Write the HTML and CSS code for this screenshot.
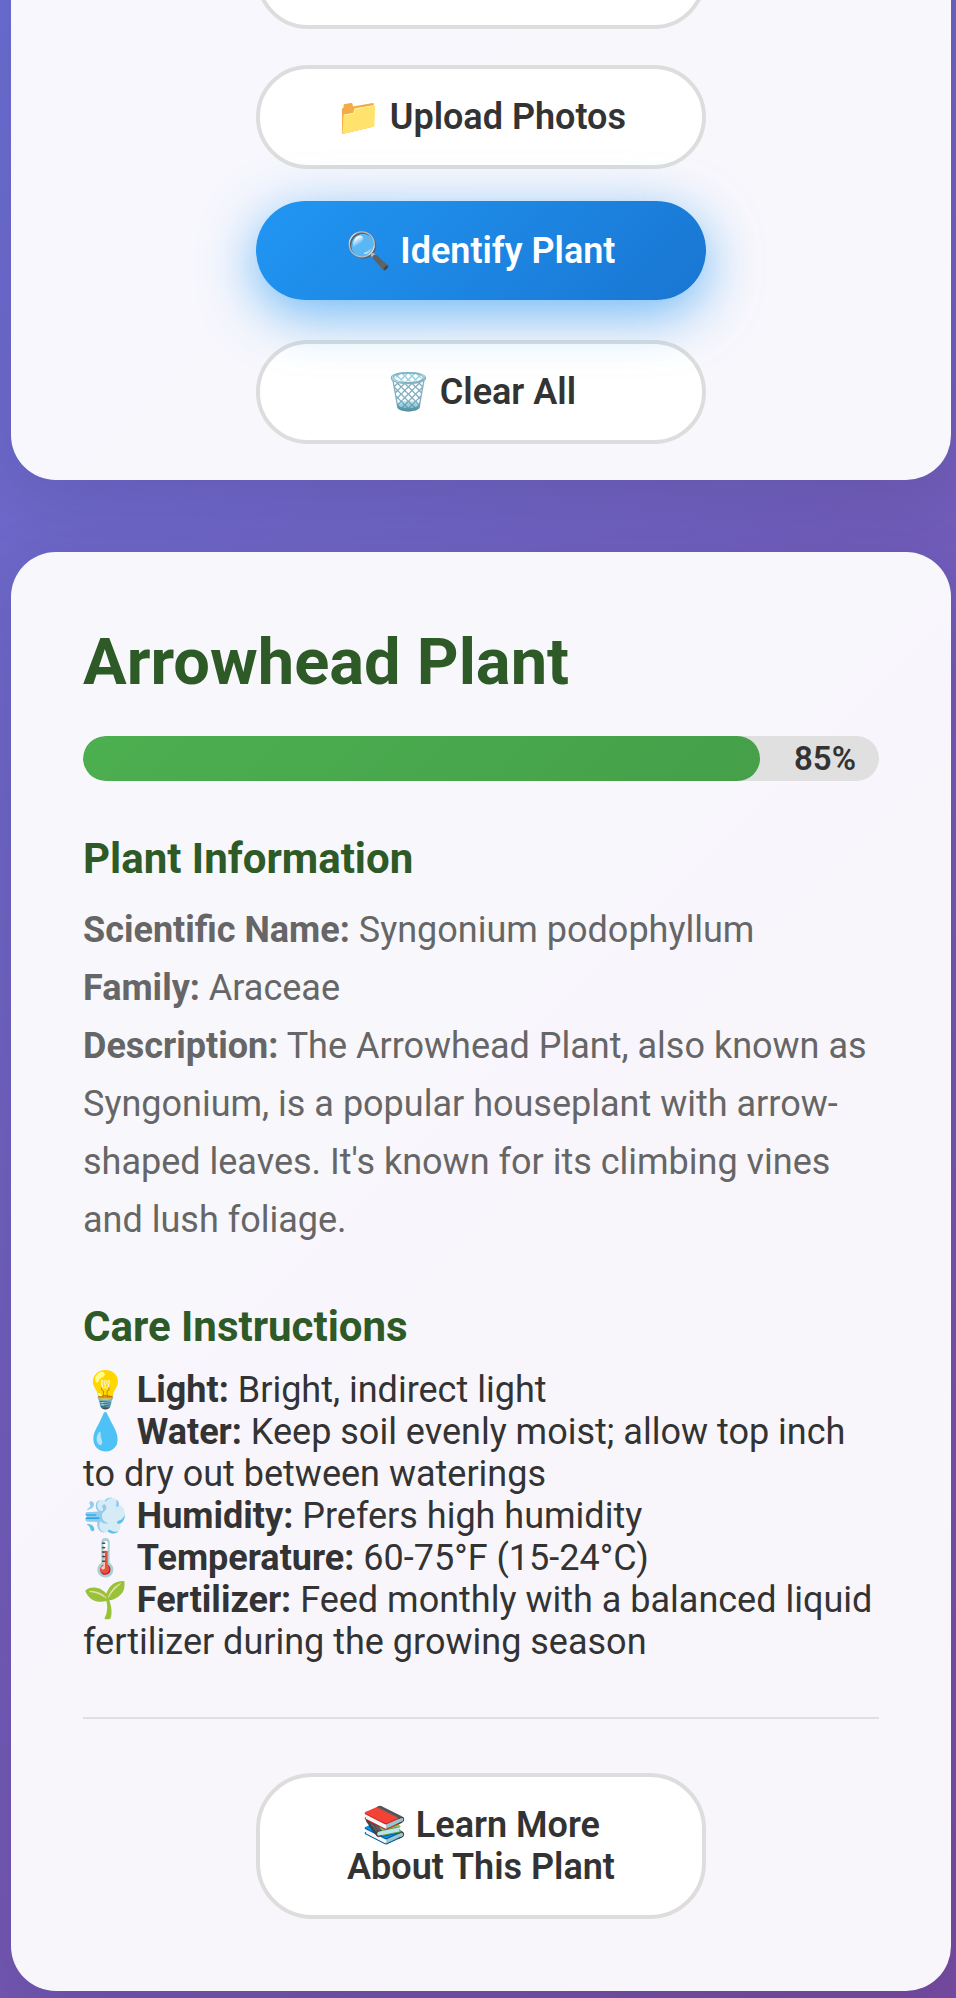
FILE: index.html
```html
<!DOCTYPE html>
<html lang="en">
<head>
<meta charset="UTF-8">
<meta name="viewport" content="width=device-width, initial-scale=1.0">
<title>Plant Identifier</title>
<link rel="stylesheet" href="styles.css">
</head>
<body>
<main class="container">
    <section class="card upload-card">
        <div class="button-group">
            <button type="button" class="btn" aria-label="Take Photo"></button>
            <button type="button" class="btn">📁 Upload Photos</button>
            <button type="button" class="btn btn-primary">🔍 Identify Plant</button>
            <button type="button" class="btn">🗑️ Clear All</button>
        </div>
    </section>

    <section class="card result-card">
        <h2>Arrowhead Plant</h2>
        <div class="confidence-bar">
            <div class="confidence-fill" style="width: 85%"></div>
            <span class="confidence-text">85%</span>
        </div>

        <div class="plant-info">
            <h3>Plant Information</h3>
            <p><strong>Scientific Name:</strong> Syngonium podophyllum</p>
            <p><strong>Family:</strong> Araceae</p>
            <p><strong>Description:</strong> The Arrowhead Plant, also known as Syngonium, is a popular houseplant with arrow-shaped leaves. It's known for its climbing vines and lush foliage.</p>
        </div>

        <div class="care-info">
            <h3>Care Instructions</h3>
            <ul class="care-list">
                <li>💡 <strong>Light:</strong> Bright, indirect light</li>
                <li>💧 <strong>Water:</strong> Keep soil evenly moist; allow top inch to dry out between waterings</li>
                <li>💨 <strong>Humidity:</strong> Prefers high humidity</li>
                <li>🌡️ <strong>Temperature:</strong> 60-75°F (15-24°C)</li>
                <li>🌱 <strong>Fertilizer:</strong> Feed monthly with a balanced liquid fertilizer during the growing season</li>
            </ul>
        </div>

        <div class="learn-more">
            <button type="button" class="btn">📚 Learn More About This Plant</button>
        </div>
    </section>
</main>
</body>
</html>
```
FILE: styles.css
```css
* {
    margin: 0;
    padding: 0;
    box-sizing: border-box;
}
body {
    font-family: Roboto, "Noto Color Emoji", sans-serif;
    font-size: 36px;
    line-height: 42px;
    color: #333;
    background: linear-gradient(135deg, #6b6ed3 0%, #764ba2 100%);
}
.container {
    display: flex;
    flex-direction: column;
    gap: 72px;
    padding: 0 5px 7px 11px;
    overflow: hidden;
}
.card {
    background: rgba(255, 255, 255, 0.95);
    border-radius: 45px;
    box-shadow: 0 18px 72px rgba(0, 0, 0, 0.1);
}
/* starts above the fold, the first button is cut by the window */
.upload-card {
    margin-top: -111px;
    padding: 36px;
}
.result-card {
    padding: 72px;
}
.button-group {
    display: flex;
    flex-direction: column;
    align-items: center;
    gap: 36px;
}
.btn {
    width: 450px;
    max-width: 100%;
    min-height: 104px;
    padding: 27px 68px;
    border: 4px solid #ddd;
    border-radius: 56px;
    background: white;
    color: #333;
    font-family: inherit;
    font-size: 36px;
    font-weight: 600;
    line-height: 42px;
    cursor: pointer;
}
.btn-primary {
    min-height: 99px;
    border: none;
    background: linear-gradient(135deg, #2196f3, #1976d2);
    color: white;
    box-shadow: 0 14px 54px rgba(33, 150, 243, 0.65);
    transform: translateY(-4px);
}
h2 {
    font-size: 65px;
    line-height: 76px;
    color: #2d5a27;
    margin-bottom: 36px;
}
h3 {
    font-size: 42px;
    line-height: 49px;
    color: #2d5a27;
    margin-bottom: 18px;
}
.confidence-bar {
    position: relative;
    height: 45px;
    background: #e0e0e0;
    border-radius: 23px;
    overflow: hidden;
}
.confidence-fill {
    height: 100%;
    background: linear-gradient(135deg, #4caf50, #45a049);
    border-radius: 23px;
}
.confidence-text {
    position: absolute;
    top: 0;
    right: 23px;
    font-size: 33px;
    font-weight: 600;
    line-height: 45px;
}
.plant-info,
.care-info {
    margin-top: 53px;
}
.plant-info p {
    line-height: 58px;
    color: #666;
}
.care-list {
    list-style: none;
}
.learn-more {
    margin-top: 54px;
    padding-top: 54px;
    border-top: 2px solid #e0e0e0;
    display: flex;
    justify-content: center;
}
```
